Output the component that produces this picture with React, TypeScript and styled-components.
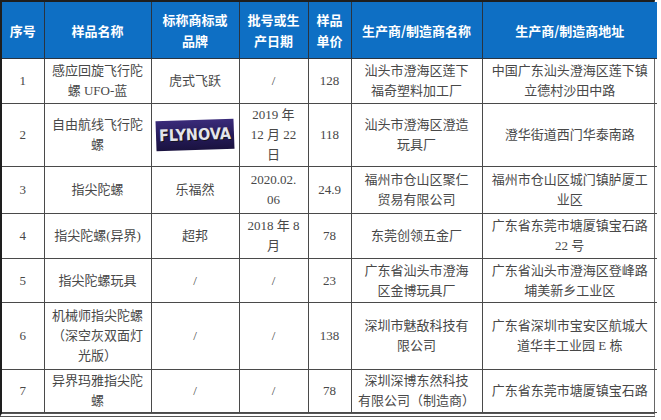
import React from "react";
import styled, { createGlobalStyle } from "styled-components";

const GlobalStyle = createGlobalStyle`
  html, body {
    margin: 0;
    padding: 0;
    background: #ffffff;
  }
  body {
    font-family: "Liberation Serif", "Noto Sans CJK SC", serif;
  }
`;

const Frame = styled.div`
  width: 655px;
  border-left: 2px solid #1e1e1e;
  border-top: 2px solid #1e1e1e;
  border-bottom: 4px double #555555;
  border-right: 1px solid #666666;
  box-sizing: border-box;
`;

const Table = styled.table`
  width: 100%;
  table-layout: fixed;
  border-collapse: collapse;
`;

const Head = styled.th`
  height: 56px;
  padding: 0 4px;
  background: #0e6fc4;
  color: #ffffff;
  font-family: "Noto Sans CJK SC", sans-serif;
  font-weight: 700;
  font-size: 13px;
  line-height: 21px;
  text-align: center;
  border-left: 1px solid #2a3440;
  border-bottom: 1px solid #2a3440;

  &:first-child {
    border-left: none;
  }
`;

const BodyRow = styled.tr<{ $h: number }>`
  height: ${(p) => p.$h}px;
`;

const Cell = styled.td`
  padding: 0 2px;
  color: #484848;
  font-size: 13px;
  line-height: 20px;
  text-align: center;
  vertical-align: middle;
  border: 1px solid #4a4a4a;
  border-top: none;
  white-space: nowrap;

  &:first-child {
    border-left: none;
  }
  &:last-child {
    border-right: none;
  }
`;

const Logo = styled.span`
  display: inline-flex;
  align-items: center;
  justify-content: center;
  width: 78px;
  height: 30px;
  background: linear-gradient(180deg, #3a2b7a 0%, #241a56 60%, #1a123f 100%);
  color: #e4e4ea;
  font-family: "DejaVu Sans Condensed", "DejaVu Sans", sans-serif;
  font-weight: 700;
  font-size: 16px;
  letter-spacing: 0;
  text-shadow: 1px 1px 0 #111;
  transform: rotate(-2deg);
  vertical-align: middle;
`;

type Row = {
  no: string;
  name: React.ReactNode;
  brand: React.ReactNode;
  batch: React.ReactNode;
  price: string;
  maker: React.ReactNode;
  address: React.ReactNode;
  height: number;
};

const widths = [42, 107, 88, 69, 43, 131, 175];

const rows: Row[] = [
  {
    no: "1",
    name: <>感应回旋飞行陀<br />螺 UFO-蓝</>,
    brand: "虎式飞跃",
    batch: "/",
    price: "128",
    maker: <>汕头市澄海区莲下<br />福奇塑料加工厂</>,
    address: <>中国广东汕头澄海区莲下镇<br />立德村沙田中路</>,
    height: 45,
  },
  {
    no: "2",
    name: <>自由航线飞行陀<br />螺</>,
    brand: <Logo>FLYNOVA</Logo>,
    batch: <>2019 年<br />12 月 22<br />日</>,
    price: "118",
    maker: <>汕头市澄海区澄造<br />玩具厂</>,
    address: "澄华街道西门华泰南路",
    height: 63,
  },
  {
    no: "3",
    name: "指尖陀螺",
    brand: "乐福然",
    batch: <>2020.02.<br />06</>,
    price: "24.9",
    maker: <>福州市仓山区聚仁<br />贸易有限公司</>,
    address: <>福州市仓山区城门镇胪厦工<br />业区</>,
    height: 47,
  },
  {
    no: "4",
    name: "指尖陀螺(异界)",
    brand: "超邦",
    batch: <>2018 年 8<br />月</>,
    price: "78",
    maker: "东莞创领五金厂",
    address: <>广东省东莞市塘厦镇宝石路<br />22 号</>,
    height: 45,
  },
  {
    no: "5",
    name: "指尖陀螺玩具",
    brand: "/",
    batch: "/",
    price: "23",
    maker: <>广东省汕头市澄海<br />区金博玩具厂</>,
    address: <>广东省汕头市澄海区登峰路<br />埔美新乡工业区</>,
    height: 44,
  },
  {
    no: "6",
    name: <>机械师指尖陀螺<br />（深空灰双面灯<br />光版）</>,
    brand: "/",
    batch: "/",
    price: "138",
    maker: <>深圳市魅敌科技有<br />限公司</>,
    address: <>广东省深圳市宝安区航城大<br />道华丰工业园 E 栋</>,
    height: 67,
  },
  {
    no: "7",
    name: <>异界玛雅指尖陀<br />螺</>,
    brand: "/",
    batch: "/",
    price: "78",
    maker: <>深圳深博东然科技<br />有限公司（制造商）</>,
    address: "广东省东莞市塘厦镇宝石路",
    height: 43,
  },
];

export default function App() {
  return (
    <>
      <GlobalStyle />
      <Frame>
        <Table>
          <colgroup>
            {widths.map((w, i) => (
              <col key={i} style={{ width: w }} />
            ))}
          </colgroup>
          <thead>
            <tr>
              <Head>序号</Head>
              <Head>样品名称</Head>
              <Head>标称商标或<br />品牌</Head>
              <Head>批号或生<br />产日期</Head>
              <Head>样品<br />单价</Head>
              <Head>生产商/制造商名称</Head>
              <Head>生产商/制造商地址</Head>
            </tr>
          </thead>
          <tbody>
            {rows.map((r) => (
              <BodyRow key={r.no} $h={r.height}>
                <Cell>{r.no}</Cell>
                <Cell>{r.name}</Cell>
                <Cell>{r.brand}</Cell>
                <Cell>{r.batch}</Cell>
                <Cell>{r.price}</Cell>
                <Cell>{r.maker}</Cell>
                <Cell>{r.address}</Cell>
              </BodyRow>
            ))}
          </tbody>
        </Table>
      </Frame>
    </>
  );
}
